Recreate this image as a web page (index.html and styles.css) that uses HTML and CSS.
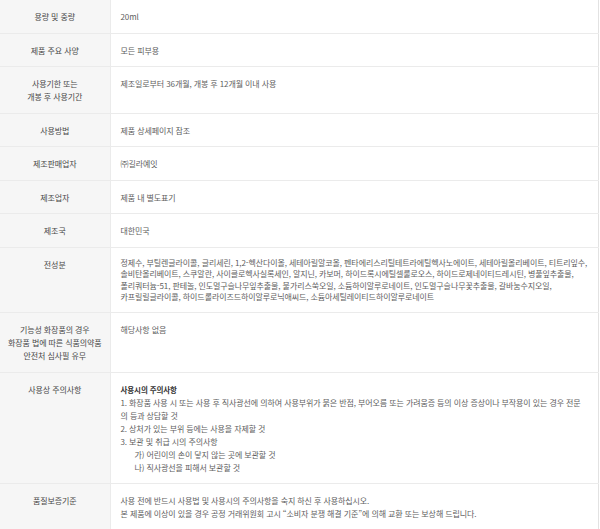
FILE: index.html
```html
<!DOCTYPE html>
<html lang="ko">
<head>
    <meta charset="UTF-8">
    <meta name="viewport" content="width=device-width, initial-scale=1.0">
    <title>상품정보 제공고시</title>
    <link rel="stylesheet" href="styles.css">
</head>
<body>
    <table class="info-table">
        <tr>
            <th>용량 및 중량</th>
            <td>20ml</td>
        </tr>
        <tr>
            <th>제품 주요 사양</th>
            <td>모든 피부용</td>
        </tr>
        <tr>
            <th>사용기한 또는<br>개봉 후 사용기간</th>
            <td>제조일로부터 36개월, 개봉 후 12개월 이내 사용</td>
        </tr>
        <tr>
            <th>사용방법</th>
            <td>제품 상세페이지 참조</td>
        </tr>
        <tr>
            <th>제조판매업자</th>
            <td>㈜길라예잇</td>
        </tr>
        <tr>
            <th>제조업자</th>
            <td>제품 내 별도표기</td>
        </tr>
        <tr>
            <th>제조국</th>
            <td>대한민국</td>
        </tr>
        <tr>
            <th>전성분</th>
            <td class="ingredients">
                정제수, 부틸렌글라이콜, 글리세린, 1,2-헥산다이올, 세테아릴알코올, 펜타에리스리틸테트라에틸헥사노에이트, 세테아릴올리베이트, 티트리잎수,<br>
                솔비탄올리베이트, 스쿠알란, 사이클로헥사실록세인, 알지닌, 카보머, 하이드록시에틸셀룰로오스, 하이드로제네이티드레시틴, 병풀잎추출물,<br>
                폴리쿼터늄-51, 판테놀, 인도멀구슬나무잎추출물, 불가리스쑥오일, 소듐하이알루로네이트, 인도멀구슬나무꽃추출물, 갈바눔수지오일,<br>
                카프릴릴글라이콜, 하이드롤라이즈드하이알루로닉애씨드, 소듐아세틸레이티드하이알루로네이트
            </td>
        </tr>
        <tr>
            <th>기능성 화장품의 경우<br>화장품 법에 따른 식품의약품<br>안전처 심사필 유무</th>
            <td>해당사항 없음</td>
        </tr>
        <tr>
            <th>사용상 주의사항</th>
            <td class="notice">
                <strong>사용시의 주의사항</strong><br>
                1. 화장품 사용 시 또는 사용 후 직사광선에 의하여 사용부위가 붉은 반점, 부어오름 또는 가려움증 등의 이상 증상이나 부작용이 있는 경우 전문<br>
                의 등과 상담할 것<br>
                2. 상처가 있는 부위 등에는 사용을 자제할 것<br>
                3. 보관 및 취급 시의 주의사항<br>
                <span class="sub">가) 어린이의 손이 닿지 않는 곳에 보관할 것</span><br>
                <span class="sub">나) 직사광선을 피해서 보관할 것</span>
            </td>
        </tr>
        <tr>
            <th>품질보증기준</th>
            <td>
                사용 전에 반드시 사용법 및 사용시의 주의사항을 숙지 하신 후 사용하십시오.<br>
                본 제품에 이상이 있을 경우 공정 거래위원회 고시 “소비자 분쟁 해결 기준”에 의해 교환 또는 보상해 드립니다.
            </td>
        </tr>
    </table>
</body>
</html>
```

FILE: styles.css
```css
* {
    margin: 0;
    padding: 0;
    box-sizing: border-box;
}

body {
    background: #ffffff;
    font-family: 'Noto Sans CJK KR', sans-serif;
    font-size: 8px;
    letter-spacing: -0.1px;
    color: #5e5e5e;
}

.info-table {
    width: 599px;
    table-layout: fixed;
    border-collapse: collapse;
    border-right: 1px solid #e2e2e2;
}

.info-table tr {
    border-bottom: 1px solid #ebebeb;
}

.info-table th,
.info-table td {
    vertical-align: top;
    line-height: 13px;
    padding: 10px 10px 9.5px;
    white-space: nowrap;
}

.info-table th {
    width: 110px;
    padding: 10px 2px 9.5px;
    background: #f6f6f6;
    border-right: 1px solid #ebebeb;
    font-weight: normal;
    color: #484848;
    text-align: center;
}

.info-table td {
    text-align: left;
}

.info-table .ingredients {
    line-height: 11.5px;
    padding-top: 9px;
}

.notice strong {
    color: #333333;
    font-weight: bold;
    font-size: 7.5px;
}

.notice .sub {
    padding-left: 14px;
}
```
